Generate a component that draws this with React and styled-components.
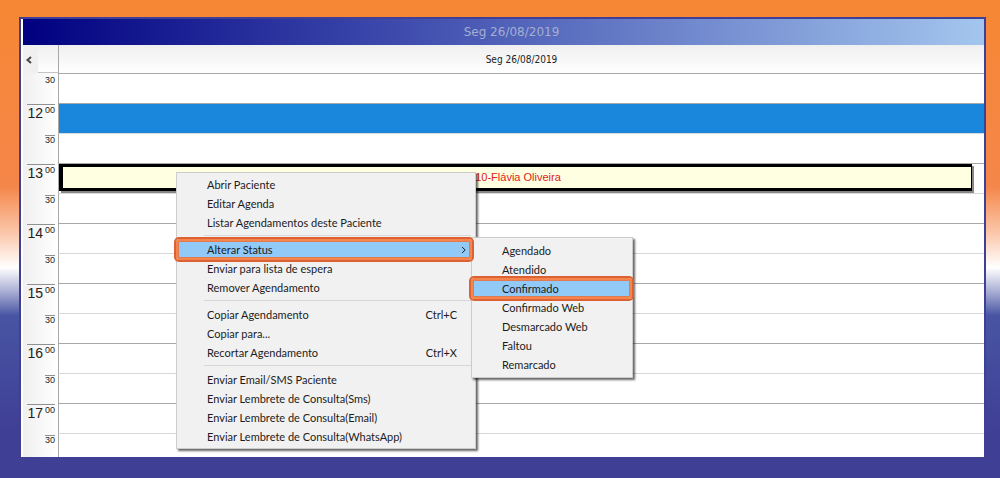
import React from "react";
import styled, { createGlobalStyle } from "styled-components";

const slots = [
  { minute: "30", first: true },
  { hour: "12", minute: "00", selected: true },
  { minute: "30" },
  { hour: "13", minute: "00", patient: "10-Flávia Oliveira" },
  { minute: "30" },
  { hour: "14", minute: "00" },
  { minute: "30" },
  { hour: "15", minute: "00" },
  { minute: "30" },
  { hour: "16", minute: "00" },
  { minute: "30" },
  { hour: "17", minute: "00" },
  { minute: "30", last: true },
];

const statuses = [
  "Agendado",
  "Atendido",
  "Confirmado",
  "Confirmado Web",
  "Desmarcado Web",
  "Faltou",
  "Remarcado",
];

const menuGroups = [
  [
    { label: "Abrir Paciente" },
    { label: "Editar Agenda" },
    { label: "Listar Agendamentos deste Paciente" },
  ],
  [
    { label: "Alterar Status", children: statuses },
    { label: "Enviar para lista de espera" },
    { label: "Remover Agendamento" },
  ],
  [
    { label: "Copiar Agendamento", shortcut: "Ctrl+C" },
    { label: "Copiar para..." },
    { label: "Recortar Agendamento", shortcut: "Ctrl+X" },
  ],
  [
    { label: "Enviar Email/SMS Paciente" },
    { label: "Enviar Lembrete de Consulta(Sms)" },
    { label: "Enviar Lembrete de Consulta(Email)" },
    { label: "Enviar Lembrete de Consulta(WhatsApp)" },
  ],
];

const StatusMenu = ({ items }) => (
  <SubMenu>
    {items.map((status) => (
      <li key={status}>
        <Item $active={status === "Confirmado"} $wide>
          {status}
        </Item>
      </li>
    ))}
  </SubMenu>
);

const ContextMenu = () => (
  <MainMenu>
    {menuGroups.map((group, index) => (
      <React.Fragment key={group[0].label}>
        {index > 0 && <Separator role="separator" />}
        {group.map(({ label, shortcut, children }) => (
          <li key={label}>
            <Item $active={Boolean(children)}>
              {label}
              {shortcut && <Shortcut>{shortcut}</Shortcut>}
              {children && (
                <Arrow viewBox="0 0 6 8">
                  <path d="M1 1l3.2 3L1 7" />
                </Arrow>
              )}
            </Item>
            {children && <StatusMenu items={children} />}
          </li>
        ))}
      </React.Fragment>
    ))}
  </MainMenu>
);

const App = () => {
  return (
    <Page>
      <GlobalStyle />
      <Frame>
        <Title>Seg 26/08/2019</Title>
        <Header>
          <Back aria-label="Dia anterior">
            <svg width="6" height="8" viewBox="0 0 6 8">
              <path d="M5 1L1.5 4L5 7" />
            </svg>
          </Back>
          <Corner />
          <Day>Seg 26/08/2019</Day>
        </Header>
        {slots.map(({ hour, minute, first, last, selected, patient }, index) => (
          <Row key={index} $last={last}>
            <Gutter>
              <Time $line={Boolean(hour)}>
                {hour && <Hour>{hour}</Hour>}
                <Minute $line={!hour && !first}>{minute}</Minute>
              </Time>
            </Gutter>
            <Slot $strong={Boolean(hour) || first} $selected={selected}>
              {patient && <Appointment>{patient}</Appointment>}
            </Slot>
          </Row>
        ))}
        <ContextMenu />
      </Frame>
    </Page>
  );
};

const GlobalStyle = createGlobalStyle`
  * {
    box-sizing: border-box;
  }
  body {
    margin: 0;
  }
  button {
    margin: 0;
    border: 0;
    font: inherit;
    color: inherit;
  }
`;

const Page = styled.div`
  min-height: 100vh;
  padding: 17px 14px 19px 19px;
  font-family: "Liberation Sans", Arial, sans-serif;
  background: linear-gradient(
    #f68733 0%,
    #f5864a 39%,
    #fbc9ad 49%,
    #ffffff 56%,
    #a9aed3 61%,
    #4855a3 66%,
    #3f3f96 90%
  );
`;

const Frame = styled.main`
  position: relative;
  padding-left: 2px;
  border: 2px solid #3f3f96;
  background: #fff;
`;

const Title = styled.h1`
  margin: 0;
  padding-left: 16px;
  font: 12px/26px "DejaVu Sans", Verdana, sans-serif;
  text-align: center;
  color: #a3afd0;
  background: linear-gradient(90deg, #000080, #4351b0 42%, #a3c6ee);
`;

const Header = styled.div`
  display: flex;
  height: 28px;
  background: linear-gradient(#efefef, #fff);
`;

const Back = styled.button`
  width: 15px;
  padding: 0 0 0 3px;
  text-align: left;
  background: #f0f0f0;
  path {
    fill: none;
    stroke: #444;
    stroke-width: 2;
  }
`;

const Corner = styled.div`
  width: 20px;
  border-bottom: 1px solid #c4c4c4;
`;

const Day = styled.div`
  flex: 1;
  border-left: 1px solid #a8a8a8;
  font: 10px/30px "DejaVu Sans Condensed", Tahoma, sans-serif;
  text-align: center;
  color: #222;
`;

const Row = styled.div`
  display: flex;
  height: ${({ $last }) => ($last ? 24 : 30)}px;
`;

const Gutter = styled.div`
  width: 35px;
  padding: 1px 3px 0 4px;
  background: linear-gradient(90deg, #f0f0f0, #fff);
`;

const Time = styled.div`
  display: flex;
  justify-content: flex-end;
  gap: 2px;
  border-top: 1px solid ${({ $line }) => ($line ? "#909090" : "transparent")};
  color: #222;
`;

const Hour = styled.span`
  font-size: 14px;
  line-height: 17px;
`;

const Minute = styled.span`
  border-top: 1px solid ${({ $line }) => ($line ? "#909090" : "transparent")};
  font-size: 9px;
  line-height: 8px;
`;

const Slot = styled.div`
  flex: 1;
  border-top: 1px solid ${({ $strong }) => ($strong ? "#a8a8a8" : "#d8d8d8")};
  border-left: 1px solid #a8a8a8;
  background: ${({ $selected }) => ($selected ? "#1a86dc" : "#fff")};
`;

const Appointment = styled.button`
  display: block;
  width: calc(100% - 12px);
  height: 27px;
  padding: 0 0 0 2px;
  border: solid #000;
  border-width: 3px 1px 3px 4px;
  font-size: 11px;
  line-height: 19px;
  text-align: center;
  color: #e02020;
  background: #ffffe1;
  box-shadow: 2px 2px 0 #888;
`;

const Menu = styled.ul`
  position: absolute;
  margin: 0;
  padding: 2px 0;
  list-style: none;
  border: 1px solid #ccc;
  font: 11px/19px Lato, "Segoe UI", sans-serif;
  color: #1c1c1c;
  background: #f1f1f1;
  box-shadow: 2px 2px 2px rgba(0, 0, 0, 0.6);
  li {
    position: relative;
  }
`;

const MainMenu = styled(Menu)`
  top: 153px;
  left: 155px;
  width: 300px;
`;

const SubMenu = styled(Menu)`
  z-index: 1;
  top: -3px;
  left: 294px;
  width: 162px;
  padding: 3px 0;
`;

const Item = styled.button`
  position: relative;
  display: flex;
  align-items: center;
  width: 100%;
  height: 19px;
  padding: 0 8px 0 30px;
  text-align: left;
  background: ${({ $active }) => ($active ? "#91c9f7" : "transparent")};

  /* orange ring round the highlighted option */
  &::after {
    content: "";
    display: ${({ $active }) => ($active ? "block" : "none")};
    position: absolute;
    z-index: 3;
    inset: -1px ${({ $wide }) => ($wide ? 0 : 3)}px -1px -1px;
    border: 2px solid #f5854c;
    border-radius: 3px;
    box-shadow: 0 0 0 2px #dd6233, inset 0 0 0 1px #e07a50;
  }
`;

const Shortcut = styled.kbd`
  margin-left: auto;
  padding-right: 10px;
  font: inherit;
`;

const Arrow = styled.svg`
  width: 6px;
  height: 8px;
  margin-left: auto;
  fill: none;
  stroke: #222;
`;

const Separator = styled.li`
  height: 8px;
  padding: 3px 4px 0 27px;
  &::before {
    content: "";
    display: block;
    border-top: 1px solid #d7d7d7;
  }
`;

export default App;
